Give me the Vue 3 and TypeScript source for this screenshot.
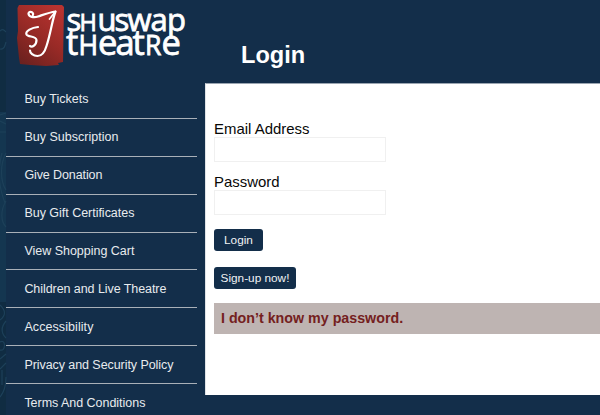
<script setup lang="ts">
interface MenuItem {
  label: string
  width: number
}

const menu: MenuItem[] = [
  { label: 'Buy Tickets', width: 64 },
  { label: 'Buy Subscription', width: 94 },
  { label: 'Give Donation', width: 78 },
  { label: 'Buy Gift Certificates', width: 110 },
  { label: 'View Shopping Cart', width: 110 },
  { label: 'Children and Live Theatre', width: 142 },
  { label: 'Accessibility', width: 69 },
  { label: 'Privacy and Security Policy', width: 149 },
  { label: 'Terms And Conditions', width: 121 },
]
</script>

<template>
  <div class="page">
    <div class="edge">
      <svg width="6" height="415" viewBox="0 0 6 415">
        <rect width="6" height="415" fill="#102c42" />
        <rect y="112" width="6" height="190" fill="#143650" />
        <g fill="none" stroke="#1d4059" stroke-width="1.2">
          <path d="M0 31C3 28 5 31 6 32M0 49C4 50 5 46 6 42M0 115L6 113M0 121L6 124M0 132H6M6 153C0 164 0 181 6 190M2 153C-2 167 -2 185 5 203M6 201C0 211 1 222 6 227" />
          <path d="M0 305C6 311 6 315 0 320M6 321C1 327 1 333 6 338M0 342C6 338 6 352 0 350M0 359L6 354M0 369L6 363M2 370V385M0 397C5 391 6 382 6 377" />
        </g>
      </svg>
    </div>
    <aside class="sidebar">
      <div class="brand">
        <svg width="191" height="81" viewBox="6 0 191 81" role="img" aria-label="Shuswap Theatre">
          <defs>
            <linearGradient id="crest" x1="0.8" y1="0" x2="0.2" y2="1">
              <stop offset="0" stop-color="#b83330" />
              <stop offset="0.5" stop-color="#982a26" />
              <stop offset="1" stop-color="#6c211f" />
            </linearGradient>
          </defs>
          <path d="M19 5L62 5L64 7L63 62L58 63L59 65L46 66L30 65L20 64L19 58L17 38L18 31L17.500 8Z" fill="url(#crest)" />
          <path d="M33 15C34 12 29 10.500 28.500 13.500C28.500 17 34 18 38 16.500C44 14.500 49 12.500 55.500 11.500C52 21 50.500 34 46.500 46C44.500 53 42 56 37.500 56C33 56 30 53 30 50.500M38 27C32 27.500 25 31 26.500 34.500C28 37.500 36 35.500 36.500 40C36.500 45 32 48 30 46" fill="none" stroke="#fff" stroke-width="2.200" stroke-linecap="round" stroke-linejoin="round" />
          <path d="M55.500 11.500L49.500 19" stroke="#fff" stroke-width="1.700" stroke-linecap="round" />
          <g class="wordmark">
            <text y="30.500" font-size="31"><tspan x="66.500">s</tspan><tspan x="79.500" font-size="23.500">H</tspan><tspan x="97.500">u</tspan><tspan x="114.500">s</tspan><tspan x="127.500">w</tspan><tspan x="150.500">a</tspan><tspan x="167">p</tspan></text>
            <text y="55" font-size="34.500"><tspan x="66">t</tspan><tspan x="78.500" font-size="26.500">H</tspan><tspan x="98">e</tspan><tspan x="115.500">a</tspan><tspan x="132.500">t</tspan><tspan x="145" font-size="26.500">R</tspan><tspan x="161.500">e</tspan></text>
          </g>
        </svg>
      </div>
      <nav>
        <a v-for="item in menu" :key="item.label" class="item">
          <svg class="label" width="172" height="20">
            <text x="0.4" y="14" :textLength="item.width">{{ item.label }}</text>
          </svg>
        </a>
      </nav>
    </aside>
    <main class="main">
      <h1>Login</h1>
      <form class="panel" @submit.prevent>
        <label for="email">Email Address</label>
        <input id="email" type="text" />
        <label for="password">Password</label>
        <input id="password" type="password" />
        <button class="login" type="submit">Login</button>
        <button class="signup" type="button">Sign-up now!</button>
        <div class="notice">I don’t know my password.</div>
      </form>
    </main>
  </div>
</template>

<style>
body {
  overflow: hidden;
  background: #132e4a;
}
</style>

<style scoped>
* {
  box-sizing: border-box;
}
.page {
  display: flex;
  width: 600px;
  height: 415px;
  overflow: hidden;
  background: #132e4a;
  font-family: "Liberation Sans", Arial, sans-serif;
}
.edge {
  flex: 0 0 6px;
}
svg {
  display: block;
  overflow: visible;
}
.sidebar {
  flex: 0 0 199px;
  padding-right: 8px;
}
.wordmark {
  fill: #fff;
  stroke: #fff;
  stroke-width: 0.8px;
  font-family: "Open Sans", sans-serif;
}
.item {
  display: flex;
  align-items: center;
  height: 37.900px;
  padding-left: 18.300px;
  border-bottom: 1px solid #a9b0b8;
}
.label {
  fill: #e8ebee;
  font-size: 12.500px;
}
.main {
  flex: 1;
  min-width: 0;
}
h1 {
  margin: 0;
  height: 83px;
  padding: 41px 0 0 36px;
  color: #fff;
  font-size: 23.600px;
  line-height: 29px;
  font-weight: 700;
}
.panel {
  display: flex;
  flex-direction: column;
  align-items: flex-start;
  height: 312px;
  padding: 36px 0 0 8px;
  background: #fff;
  border-left: 1px solid #dfe3e7;
  border-top: 1px solid #9aa5b1;
}
.panel label {
  height: 17px;
  color: #080808;
  font-size: 14.950px;
  line-height: 18px;
}
input {
  width: 172px;
  height: 25px;
  margin: 0 0 11px;
  padding: 3px;
  border: 1px solid #f0f0f0;
  background: #fff;
  outline: none;
}
button {
  padding: 0;
  border: 0;
  border-radius: 3px;
  color: #f1f3f5;
  background: #132e4a;
  font-family: inherit;
  font-size: 11.800px;
  line-height: 20px;
}
.login {
  width: 49px;
  height: 22px;
  margin-top: 3px;
}
.signup {
  width: 82px;
  height: 22px;
  margin-top: 16px;
}
.notice {
  align-self: stretch;
  height: 31px;
  margin-top: 14px;
  padding-left: 7px;
  background: #beb4b2;
  color: #742020;
  font-size: 14.250px;
  font-weight: 700;
  line-height: 31px;
}
</style>
